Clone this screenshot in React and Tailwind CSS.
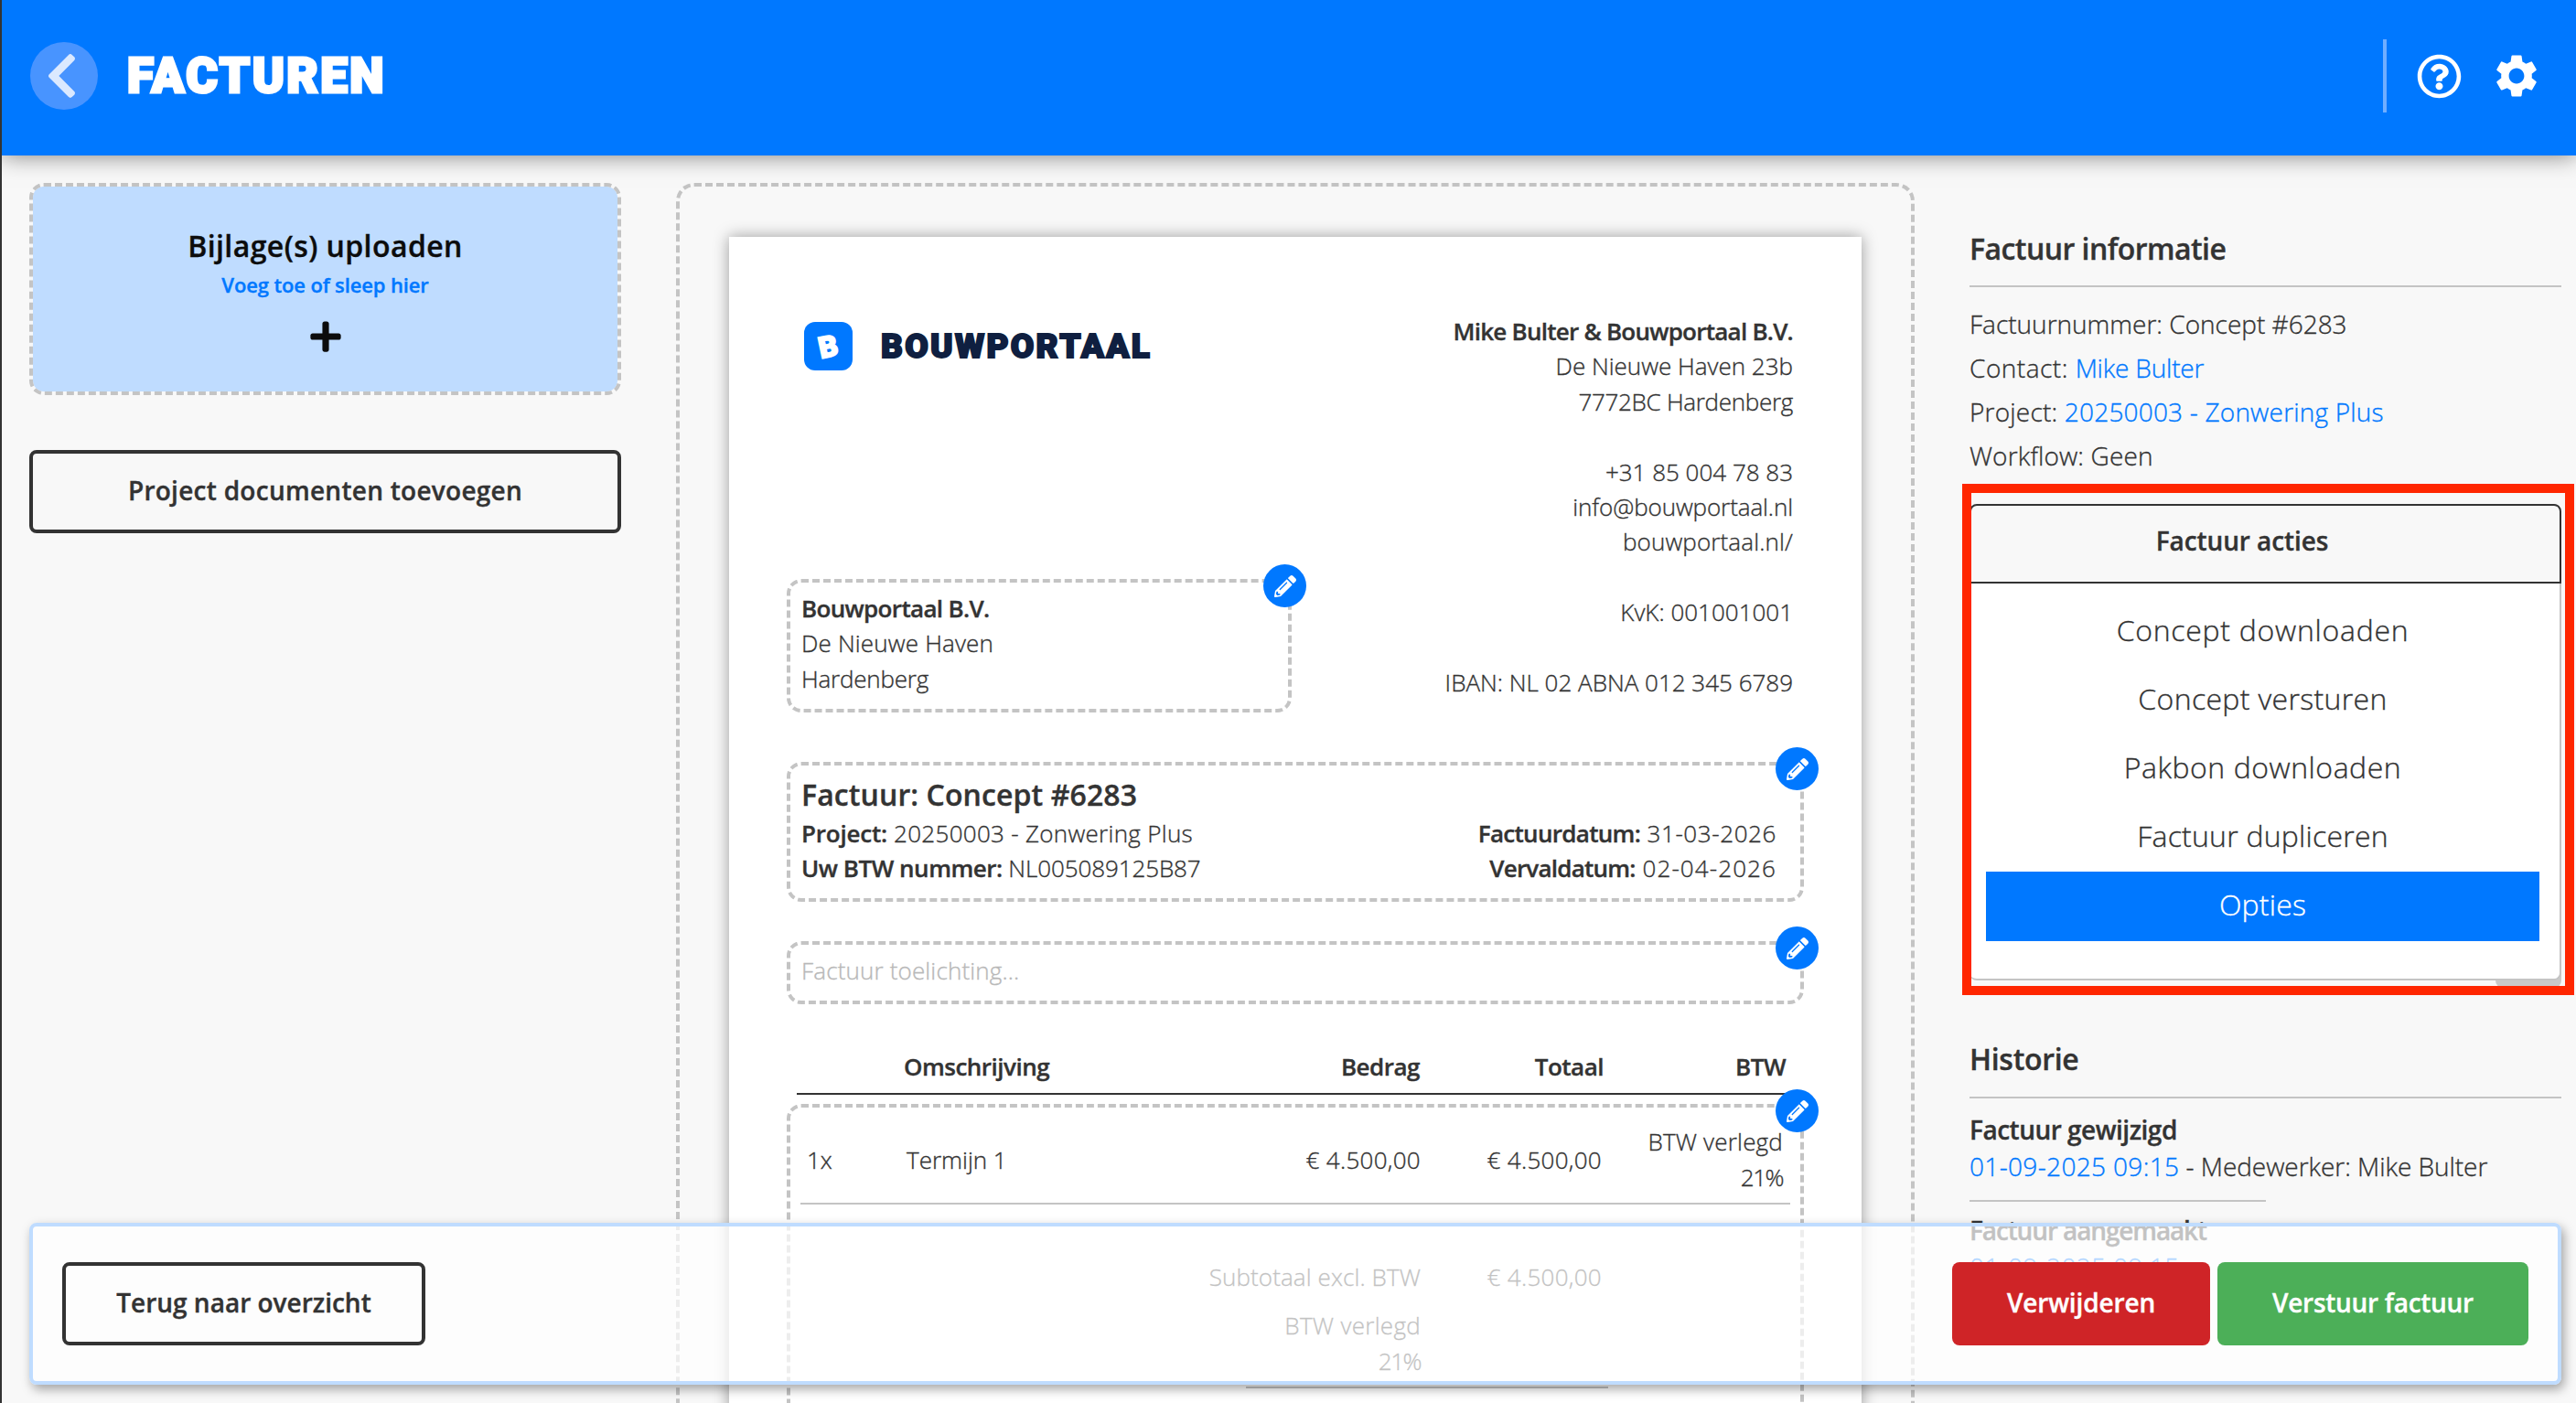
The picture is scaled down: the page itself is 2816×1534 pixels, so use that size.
import React from "react";
import { FaChevronLeft, FaPencilAlt, FaPlus, FaRegQuestionCircle } from "react-icons/fa";
import { MdSettings } from "react-icons/md";

function EditBadge() {
  return (
    <button className="absolute -right-5 -top-5 flex size-[47px] items-center justify-center rounded-full bg-[#0078ff] text-white">
      <FaPencilAlt className="size-6" />
    </button>
  );
}

function Header() {
  return (
    <header className="relative z-10 flex h-[170px] shrink-0 items-start justify-between bg-[#0078ff] pl-[31px] pr-[37px] text-white shadow-[0_0_24px_rgba(0,0,0,0.5)]">
      <div className="flex h-[166px] items-center gap-[30px]">
        <button className="flex size-[74px] items-center justify-center rounded-full bg-[#4894ff] pr-1.5 text-[#dbe9ff]">
          <FaChevronLeft className="h-14 w-[35px]" />
        </button>
        <h1 className="pl-0.5 font-[Roboto,sans-serif] text-[53px] font-black leading-[60px] tracking-[2.4px] [-webkit-text-stroke:3px_white]">
          FACTUREN
        </h1>
      </div>
      <div className="flex h-[166px] items-center">
        <div className="mr-[33px] h-20 w-1 bg-[#70aeff]" />
        <FaRegQuestionCircle className="mr-8 size-[49px]" />
        <MdSettings className="size-14" />
      </div>
    </header>
  );
}

function Attachments() {
  return (
    <aside className="flex w-[647px] shrink-0 flex-col">
      <div className="flex h-[232px] flex-col items-center rounded-2xl border-4 border-dashed border-[#c4c4c4] bg-[#bfdcff] bg-clip-padding pt-[45px] text-[#0c0c0c]">
        <div className="text-[32px] font-semibold leading-10 tracking-[0.42px]">Bijlage(s) uploaden</div>
        <div className="mt-1.5 text-[22px] font-semibold leading-8 tracking-[-0.13px] text-[#0078ff]">
          Voeg toe of sleep hier
        </div>
        <FaPlus className="mt-[22px] size-[38px]" />
      </div>
      <button className="mt-[60px] h-[91px] rounded-lg border-4 border-[#333] pb-[3px] text-[28px] font-semibold tracking-[0.27px]">
        Project documenten toevoegen
      </button>
    </aside>
  );
}

function Sender() {
  return (
    <div className="mr-3 whitespace-pre text-right">
      <div className="font-semibold tracking-[-0.75px]">Mike Bulter &amp; Bouwportaal B.V.</div>
      <div>De Nieuwe Haven 23b</div>
      <div className="tracking-[-0.3px]">7772BC Hardenberg</div>
      <div> </div>
      <div>+31 85 004 78 83</div>
      <div className="tracking-[-0.1px]">info@bouwportaal.nl</div>
      <div className="tracking-[0.13px]">bouwportaal.nl/</div>
      <div> </div>
      <div>KvK: 001001001</div>
      <div> </div>
      <div>IBAN: NL 02 ABNA 012 345 6789</div>
    </div>
  );
}

function Invoice() {
  return (
    <section className="mx-[60px] h-[1600px] w-[1354px] shrink-0 rounded-[20px] border-4 border-dashed border-[#c4c4c4] px-[54px] pt-[55px]">
      <div className="h-[1600px] bg-white px-[63px] pt-[84px] text-[26px] font-light leading-[38.4px] shadow-[0_0_16px_rgba(0,0,0,0.38)]">
        <div className="flex h-[436px] justify-between">
          <div className="w-[552px] pt-[9px]">
            <div className="ml-[19px] flex items-center gap-[31px]">
              <div className="flex size-[53px] items-center justify-center rounded-xl bg-[#0078ff] text-white">
                <span className="-rotate-12 font-[Roboto,sans-serif] text-[32px] font-black leading-none [-webkit-text-stroke:2px_white]">
                  B
                </span>
              </div>
              <div className="font-[Roboto,sans-serif] text-[37px] font-black leading-[52px] tracking-[2.3px] text-[#0f1f40] [-webkit-text-stroke:2px_#0f1f40]">
                BOUWPORTAAL
              </div>
            </div>
            <div className="relative mt-[228px] h-[146px] rounded-2xl border-4 border-dashed border-[#c4c4c4] px-[12px] pt-[9px]">
              <div className="font-semibold tracking-[-0.66px]">Bouwportaal B.V.</div>
              <div className="tracking-[0.17px]">De Nieuwe Haven</div>
              <div className="tracking-[-0.2px]">Hardenberg</div>
              <EditBadge />
            </div>
          </div>
          <Sender />
        </div>

        <div className="relative mt-[54px] flex h-[153px] justify-between rounded-2xl border-4 border-dashed border-[#c4c4c4] pl-[12px] pr-[26px] pt-[11px]">
          <div>
            <h2 className="text-[32px] font-semibold leading-[42px] tracking-[0.1px]">Factuur: Concept #6283</h2>
            <div className="mt-0.5 tracking-[0.3px]">
              <b className="font-semibold tracking-[-0.2px]">Project:</b> 20250003 - Zonwering Plus
            </div>
            <div className="tracking-[-0.1px]">
              <b className="font-semibold tracking-[-0.48px]">Uw BTW nummer:</b> NL005089125B87
            </div>
          </div>
          <div className="pt-11 text-right tracking-[0.6px]">
            <div>
              <b className="font-semibold tracking-[-0.69px]">Factuurdatum:</b> 31-03-2026
            </div>
            <div className="tracking-[1.1px]">
              <b className="font-semibold tracking-[-0.77px]">Vervaldatum:</b> 02-04-2026
            </div>
          </div>
          <EditBadge />
        </div>

        <div className="relative mt-[43px] h-[69px] rounded-2xl border-4 border-dashed border-[#c4c4c4] pl-[12px] pt-[9px] tracking-[0.15px] text-[#b8b8b8]">
          Factuur toelichting...
          <EditBadge />
        </div>

        <div className="ml-[11px] mt-[49px] grid w-[1086px] grid-cols-[117px_1fr_200px_201px_199px] border-b-2 border-[#333] pb-2.5 pr-[5px] font-semibold tracking-[-0.5px]">
          <div />
          <div>Omschrijving</div>
          <div className="text-right">Bedrag</div>
          <div className="text-right">Totaal</div>
          <div className="text-right">BTW</div>
        </div>

        <div className="relative mt-[10px] h-[600px] rounded-2xl border-4 border-dashed border-[#c4c4c4] pt-[18px]">
          <div className="ml-[11px] w-[1082px]">
            <div className="grid grid-cols-[109px_1fr_200px_198px_198px] items-center border-b-2 border-[#c4c4c4] pb-[9px] pl-[7px] pr-2">
              <div>1x</div>
              <div>Termijn 1</div>
              <div className="text-right tracking-[0.3px]">€ 4.500,00</div>
              <div className="text-right tracking-[0.3px]">€ 4.500,00</div>
              <div className="text-right">
                <div className="tracking-[0.2px]">BTW verlegd</div>
                <div className="tracking-[-1.5px]">21%</div>
              </div>
            </div>
            <div className="mt-[60px] grid grid-cols-[1fr_198px_198px] gap-y-[14.6px] pr-2 text-right tracking-[0.1px]">
              <div>Subtotaal excl. BTW</div>
              <div className="tracking-[0.3px]">€ 4.500,00</div>
              <div />
              <div>
                <div className="tracking-[0.3px]">BTW verlegd</div>
                <div className="tracking-[-1.5px]">21%</div>
              </div>
            </div>
            <div className="ml-[487px] mt-[9px] h-0.5 w-[396px] bg-[#c4c4c4]" />
          </div>
          <EditBadge />
        </div>
      </div>
    </section>
  );
}

function ActionsPanel() {
  return (
    <div className="relative mt-[29px] text-center">
      <div className="absolute -bottom-2 right-0 h-6 w-[72px] rounded-b-lg bg-[#c9c9c9]" />
      <div className="relative h-[87px] rounded-t-lg border-2 border-[#333] bg-[#f8f8f8] pr-[51px] pt-[18px] text-[28px] font-semibold leading-10 tracking-[-0.09px]">
        Factuur acties
      </div>
      <div className="relative h-[434px] rounded-b-lg border-b-2 border-r-2 border-[#c4c4c4] bg-white pl-[18px] pr-[22px] pt-[15px] text-[32px] font-light leading-[71px]">
        <div className="h-[75px] tracking-[0.72px]">Concept downloaden</div>
        <div className="h-[75px] tracking-[0.34px]">Concept versturen</div>
        <div className="h-[75px] tracking-[0.53px]">Pakbon downloaden</div>
        <div className="h-[75px] tracking-[0.22px]">Factuur dupliceren</div>
        <div className="h-[76px] bg-[#0078ff] tracking-[0.2px] text-white">Opties</div>
      </div>
      <div className="pointer-events-none absolute -bottom-4 -left-2 -right-3.5 -top-[22px] border-[10px] border-[#ff2600]" />
    </div>
  );
}

function Sidebar() {
  return (
    <aside className="w-[647px] shrink-0 pt-[52px] text-[28px] font-light">
      <h2 className="border-b-2 border-[#c4c4c4] pb-5 text-[32px] font-semibold leading-10 tracking-[-0.55px]">
        Factuur informatie
      </h2>
      <div className="mt-4 leading-[48px]">
        <div>Factuurnummer: Concept #6283</div>
        <div className="tracking-[0.5px]">
          Contact: <a className="tracking-[-0.2px] text-[#0078ff]">Mike Bulter</a>
        </div>
        <div className="tracking-[0.2px]">
          Project: <a className="text-[#0078ff]">20250003 - Zonwering Plus</a>
        </div>
        <div className="tracking-[0.14px]">Workflow: Geen</div>
      </div>
      <ActionsPanel />
      <h2 className="mt-[66px] border-b-2 border-[#c4c4c4] pb-[21px] text-[32px] font-semibold leading-10 tracking-[-0.3px]">
        Historie
      </h2>
      <div className="mt-3.5 leading-10">
        <div className="font-semibold tracking-[-0.5px]">Factuur gewijzigd</div>
        <div>
          <a className="tracking-[0.35px] text-[#0078ff]">01-09-2025 09:15</a>
          <span className="tracking-[-0.05px]"> - Medewerker: Mike Bulter</span>
        </div>
        <div className="mb-[11px] mt-[17px] h-0.5 w-[324px] bg-[#c4c4c4]" />
        <div className="font-semibold tracking-[-1.13px]">Factuur aangemaakt</div>
        <div>
          <a className="tracking-[0.35px] text-[#0078ff]">01-09-2025 09:15</a>
        </div>
      </div>
    </aside>
  );
}

function ActionBar() {
  return (
    <footer className="absolute bottom-5 left-[30px] right-4 z-20 flex h-[177px] items-center justify-between rounded-lg border-4 border-[#bfdcff] bg-white/70 px-8 text-[28px] font-semibold shadow-[3px_5px_12px_rgba(0,0,0,0.35)]">
      <button className="h-[91px] w-[397px] rounded-lg border-4 border-[#333] pb-[3px]">Terug naar overzicht</button>
      <div className="flex gap-2 text-white">
        <button className="h-[91px] w-[282px] rounded-lg bg-[#cf2427] pb-[3px] tracking-[-0.14px]">Verwijderen</button>
        <button className="h-[91px] w-[340px] rounded-lg bg-[#4caf58] pb-[3px] tracking-[-0.28px]">
          Verstuur factuur
        </button>
      </div>
    </footer>
  );
}

export default function App() {
  return (
    <div className="relative flex h-[1534px] w-[2816px] flex-col overflow-hidden border-l-2 border-[#333] bg-[#f8f8f8] font-['Open_Sans','Noto_Sans',sans-serif] text-[#333] [-webkit-text-stroke:0.35px]">
      <Header />
      <main className="flex min-h-0 flex-1 items-start pl-[30px] pt-[30px]">
        <Attachments />
        <Invoice />
        <Sidebar />
      </main>
      <ActionBar />
    </div>
  );
}
